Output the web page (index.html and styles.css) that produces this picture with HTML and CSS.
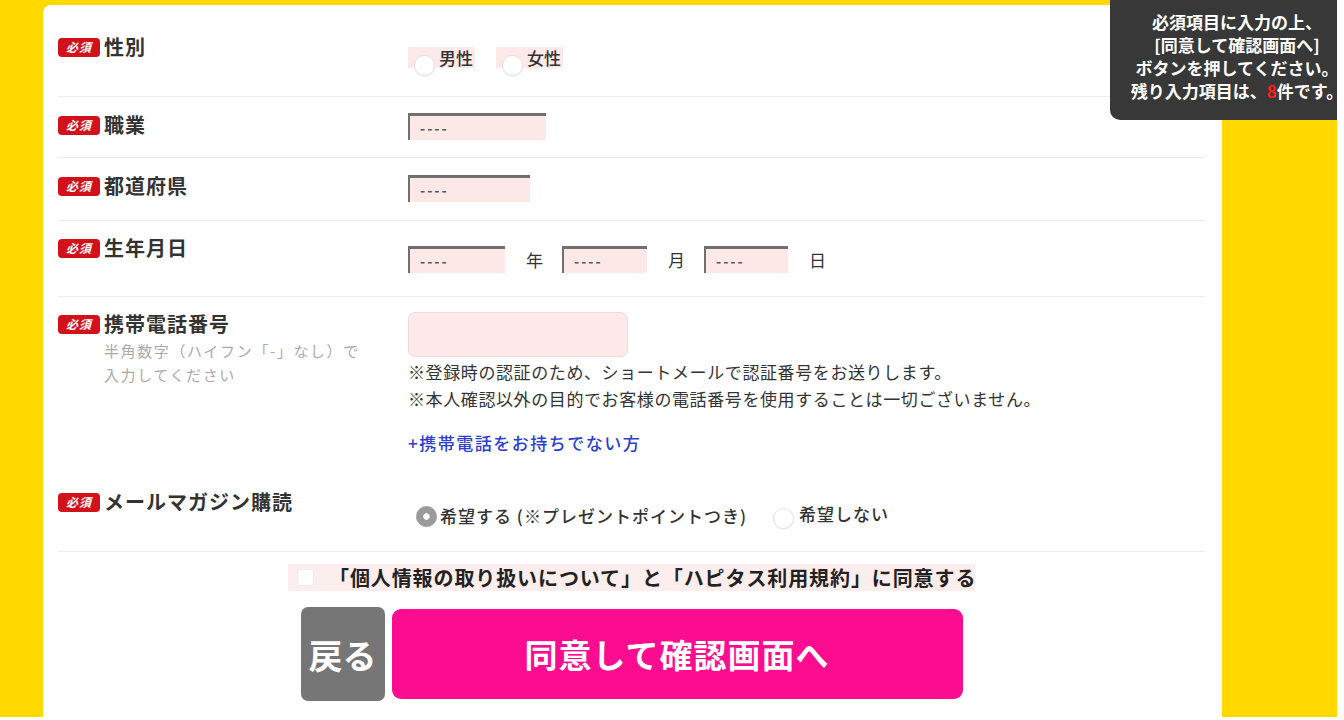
FILE: index.html
```html
<!DOCTYPE html>
<html lang="ja">
<head>
<meta charset="utf-8">
<title>会員登録</title>
<link rel="stylesheet" href="styles.css">
</head>
<body>
<div class="screen">
  <div class="card">
    <div class="row row-gender">
      <div class="label"><div class="label-head"><span class="req">必須</span><span class="title">性別</span></div></div>
      <div class="field radios">
        <label class="radio pink"><span class="circle"></span><span>男性</span></label>
        <label class="radio pink"><span class="circle"></span><span>女性</span></label>
      </div>
    </div>
    <div class="row row-job">
      <div class="label"><div class="label-head"><span class="req">必須</span><span class="title">職業</span></div></div>
      <div class="field"><span class="select w138">----</span></div>
    </div>
    <div class="row row-pref">
      <div class="label"><div class="label-head"><span class="req">必須</span><span class="title">都道府県</span></div></div>
      <div class="field"><span class="select w122">----</span></div>
    </div>
    <div class="row row-birth">
      <div class="label"><div class="label-head"><span class="req">必須</span><span class="title">生年月日</span></div></div>
      <div class="field dates">
        <span class="select w97">----</span><span class="unit">年</span>
        <span class="select w85">----</span><span class="unit">月</span>
        <span class="select w84">----</span><span class="unit">日</span>
      </div>
    </div>
    <div class="row row-phone">
      <div class="label">
        <div class="label-head"><span class="req">必須</span><span class="title">携帯電話番号</span></div>
        <p class="helper">半角数字（ハイフン「-」なし）で<br>入力してください</p>
      </div>
      <div class="field">
        <span class="text-input"></span>
        <p class="note">※登録時の認証のため、ショートメールで認証番号をお送りします。<br>※本人確認以外の目的でお客様の電話番号を使用することは一切ございません。</p>
        <a class="link" href="#">+携帯電話をお持ちでない方</a>
      </div>
    </div>
    <div class="row row-mail">
      <div class="label"><div class="label-head"><span class="req">必須</span><span class="title">メールマガジン購読</span></div></div>
      <div class="field radios mail">
        <label class="radio"><span class="circle checked"></span><span>希望する (※プレゼントポイントつき)</span></label>
        <label class="radio"><span class="circle"></span><span>希望しない</span></label>
      </div>
    </div>
    <div class="agree-wrap">
      <label class="agree"><span class="checkbox"></span><span>「個人情報の取り扱いについて」と「ハピタス利用規約」に同意する</span></label>
    </div>
    <div class="buttons">
      <button class="btn-back" type="button">戻る</button>
      <button class="btn-submit" type="button">同意して確認画面へ</button>
    </div>
  </div>
  <div class="tooltip">必須項目に入力の上、<br>[同意して確認画面へ]<br>ボタンを押してください。<br>残り入力項目は、<span class="count">8</span>件です。</div>
</div>
</body>
</html>
```
FILE: styles.css
```css
* { box-sizing: border-box; }
html, body { margin: 0; padding: 0; background: #fff; }
body {
  font-family: "Noto Sans CJK JP", "Noto Sans", sans-serif;
  color: #333;
}
.screen {
  position: relative;
  width: 1337px;
  height: 717px;
  overflow: hidden;
  background: #ffd900;
  padding-top: 5px;
}
.card {
  margin-left: 43px;
  width: 1179px;
  height: 712px;
  background: #fff;
  border-top-left-radius: 8px;
  padding: 0 17px 0 15px;
}
.row {
  display: grid;
  grid-template-columns: 350px 1fr;
  align-items: start;
  border-bottom: 1px solid #ececec;
}
.label-head {
  display: flex;
  align-items: center;
  height: 22px;
}
.req {
  display: inline-flex;
  align-items: center;
  justify-content: center;
  width: 42px;
  height: 19px;
  margin-right: 4px;
  background: #d3111b;
  color: #fff;
  border-radius: 4px;
  font-size: 12px;
  font-style: italic;
  font-weight: 700;
  letter-spacing: 1px;
  line-height: 1;
}
.title {
  font-size: 20px;
  line-height: 22px;
  font-weight: 700;
  letter-spacing: 1px;
  color: #333;
}
.helper {
  margin: 4px 0 0 46px;
  font-size: 15px;
  line-height: 24px;
  letter-spacing: 1.6px;
  color: #aaa;
}

/* row geometry */
.row-gender { padding: 31px 0 28px; }
.row-gender .field { margin-top: 11px; }
.row-job { padding: 16px 0 17px; }
.row-job .label { margin-top: 1px; }
.row-pref { padding: 17px 0 18px; }
.row-birth { padding: 16px 0 23px; }
.row-birth .field { margin-top: 9px; }
.row-phone { padding: 15px 0 18px; border-bottom: none; }
.row-phone .label { margin-top: 1px; }
.row-mail { padding: 17px 0 24px; }
.row-mail .field { margin-top: 14px; }

/* radios */
.radios { display: flex; align-items: flex-start; }
.radio {
  display: flex;
  align-items: flex-start;
  font-size: 17px;
  font-weight: 500;
  color: #333;
}
.radio.pink {
  height: 21px;
  line-height: 21px;
  background: #fde9e9;
  padding: 0 0 0 6px;
  width: 67px;
  margin-right: 21px;
}
.radio.pink .circle { margin-top: 8px; margin-right: 4px; }
.circle {
  display: inline-block;
  flex: none;
  width: 21px;
  height: 21px;
  border-radius: 50%;
  background: #fff;
  border: 1px solid #e2e2e2;
  box-shadow: 0 1px 1px rgba(0,0,0,0.06);
}
.circle.checked {
  background: radial-gradient(circle, #fff 0 3px, #9a9a9a 3.5px);
  border-color: #9a9a9a;
}
.mail .radio {
  height: 22px;
  line-height: 22px;
  margin-left: 8px;
  letter-spacing: 1px;
}
.mail .radio .circle { margin-top: 1px; margin-right: 3px; }
.mail .radio + .radio { margin-left: 26px; }
.mail .radio + .radio .circle { margin-top: 3px; margin-right: 5px; }
.mail .radio + .radio span:last-child { line-height: 18px; }

/* selects */
.dates { display: flex; align-items: center; }
.select {
  display: inline-flex;
  align-items: center;
  height: 27px;
  padding-left: 10px;
  background: #fde8e8;
  border-top: 3px solid #707070;
  border-left: 2px solid #707070;
  font-size: 14px;
  letter-spacing: 2px;
  color: #555;
  font-weight: 700;
}
.w138 { width: 138px; }
.w122 { width: 122px; }
.w97 { width: 97px; }
.w85 { width: 85px; }
.w84 { width: 84px; }
.unit {
  margin: 0 19px 0 21px;
  font-size: 17px;
  color: #333;
}

/* phone */
.text-input {
  display: block;
  width: 220px;
  height: 45px;
  background: #fde9e9;
  border: 1px solid #f4d9d9;
  border-radius: 7px;
}
.note {
  margin: 1px 0 0;
  font-size: 17px;
  line-height: 27px;
  letter-spacing: 0.6px;
  color: #333;
}
.link {
  display: block;
  margin-top: 17px;
  font-size: 17px;
  line-height: 27px;
  letter-spacing: 1.5px;
  color: #2a3ed2;
  text-decoration: none;
  font-weight: 500;
}

/* agreement */
.agree-wrap {
  display: flex;
  justify-content: center;
  margin-top: 12px;
}
.agree {
  display: flex;
  align-items: center;
  height: 27px;
  width: 687px;
  padding-left: 9px;
  background: #fdeeee;
  font-size: 20px;
  font-weight: 700;
  letter-spacing: 0.9px;
  color: #222;
  white-space: nowrap;
}
.checkbox {
  width: 17px;
  height: 17px;
  margin-right: 15px;
  background: #fff;
  border: 1px solid #eee;
  border-radius: 3px;
  flex: none;
}

/* buttons */
.buttons {
  display: flex;
  justify-content: center;
  align-items: center;
  gap: 7px;
  margin-top: 16px;
}
.btn-back, .btn-submit {
  border: none;
  color: #fff;
  font-family: inherit;
  font-weight: 700;
  padding: 0;
  cursor: pointer;
}
.btn-back {
  width: 84px;
  height: 94px;
  background: #767676;
  border-radius: 7px;
  font-size: 34px;
}
.btn-submit {
  width: 571px;
  height: 90px;
  background: #fc0c8e;
  border-radius: 9px;
  font-size: 33px;
  letter-spacing: 1px;
}

/* tooltip */
.tooltip {
  position: absolute;
  top: 0;
  left: 1110px;
  width: 254px;
  padding: 10px 0 18px;
  background: #383838;
  border-bottom-left-radius: 10px;
  color: #fff;
  text-align: center;
  font-size: 17px;
  line-height: 23px;
  font-weight: 700;
  white-space: nowrap;
}
.count { color: #ff1f1f; }
```
